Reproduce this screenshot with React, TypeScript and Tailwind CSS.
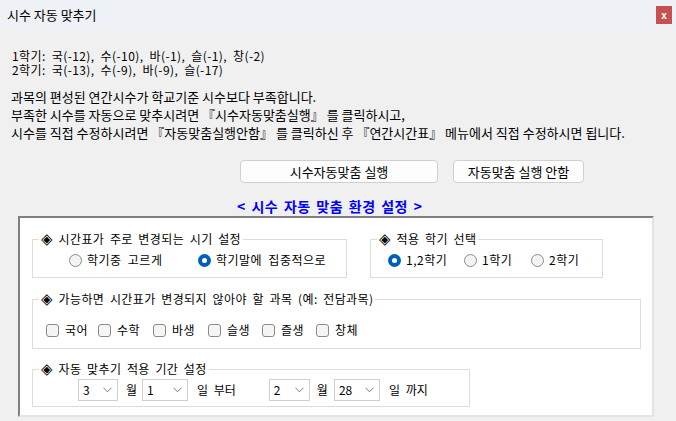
import { useState } from 'react'

const FONT = "font-['Noto_Sans_CJK_KR','Noto_Sans',sans-serif]"

function Radio({ checked, label, onClick, className }: { checked: boolean; label: string; onClick: () => void; className?: string }) {
  return (
    <label className={`flex items-center gap-[5px] ${className ?? ''}`} onClick={onClick}>
      {checked ? (
        <span className="flex h-[13px] w-[13px] items-center justify-center rounded-full bg-[#005fb8]">
          <span className="h-[5px] w-[5px] rounded-full bg-white" />
        </span>
      ) : (
        <span className="h-[13px] w-[13px] rounded-full border border-[#8a8a8a] bg-[#f3f3f3]" />
      )}
      <span className="text-[12px] leading-[14px] tracking-[0.5px] [word-spacing:3px]">{label}</span>
    </label>
  )
}

function Check({ label, className }: { label: string; className?: string }) {
  return (
    <label className={`flex items-center gap-[6px] ${className ?? ''}`}>
      <span className="h-[13px] w-[13px] rounded-[3px] border border-[#8a8a8a] bg-[#f5f5f5]" />
      <span className="text-[12px] leading-[14px] tracking-[0.5px]">{label}</span>
    </label>
  )
}

function Select({ value, className }: { value: string; className?: string }) {
  return (
    <div className={`flex h-[22px] items-center justify-between border border-[#cfcfcf] bg-white pl-[4px] pr-[5px] ${className ?? ''}`}>
      <span className="text-[12px] leading-[14px]">{value}</span>
      <svg width="9" height="6" viewBox="0 0 9 6">
        <polyline points="0.5,0.8 4.5,4.8 8.5,0.8" fill="none" stroke="#7a7a7a" strokeWidth="1" />
      </svg>
    </div>
  )
}

function Group({ title, className, children }: { title: string; className?: string; children: React.ReactNode }) {
  return (
    <fieldset className={`border border-[#dcdcdc] ${className ?? ''}`}>
      <legend className="ml-[6px] px-[2px] text-[12px] leading-[14px] tracking-[0.4px] [word-spacing:2.5px]">
        <span className="font-['DejaVu_Sans',sans-serif] text-[15px] leading-none">◈</span> {title}
      </legend>
      {children}
    </fieldset>
  )
}

export default function App() {
  const [period, setPeriod] = useState(1)
  const [term, setTerm] = useState(0)

  return (
    <div className={`h-[421px] w-[676px] overflow-hidden bg-[#f0f0f0] text-black ${FONT}`}>
      <div className="flex h-[29px] items-center justify-between bg-[#eef2f6] pl-[7px] pr-[4px]">
        <span className="text-[13px]">시수 자동 맞추기</span>
        <span className="flex h-[18px] w-[16px] items-center justify-center bg-[#c75050] text-[10px] font-bold leading-none text-white">x</span>
      </div>

      <div className="pl-[12px] pt-[20px] text-[12px] leading-[14px] tracking-[0.4px] [word-spacing:3px]">
        <p>1학기: 국(-12), 수(-10), 바(-1), 슬(-1), 창(-2)</p>
        <p>2학기: 국(-13), 수(-9), 바(-9), 슬(-17)</p>
      </div>

      <div className="mt-[11px] pl-[11px] text-[13px] leading-[18px]">
        <p>과목의 편성된 연간시수가 학교기준 시수보다 부족합니다.</p>
        <p>부족한 시수를 자동으로 맞추시려면 『시수자동맞춤실행』 를 클릭하시고,</p>
        <p>시수를 직접 수정하시려면 『자동맞춤실행안함』 를 클릭하신 후 『연간시간표』 메뉴에서 직접 수정하시면 됩니다.</p>
      </div>

      <div className="mt-[18px] flex gap-[15px] pl-[240px]">
        <button className="h-[23px] w-[198px] rounded-[4px] border border-[#d0d0d0] bg-[#fdfdfd] text-[13px]">시수자동맞춤 실행</button>
        <button className="h-[23px] w-[131px] rounded-[4px] border border-[#d0d0d0] bg-[#fdfdfd] text-[13px]">자동맞춤 실행 안함</button>
      </div>

      <p className="mt-[14px] pl-[237px] text-[14px] font-bold leading-[18px] tracking-[0.5px] text-[#0000ff] [word-spacing:2px]">&lt; 시수 자동 맞춤 환경 설정 &gt;</p>

      <div className="ml-[18px] mt-[1px] h-[201px] w-[636px] border-2 border-b-[#e3e3e3] border-l-[#808080] border-r-[#e3e3e3] border-t-[#808080] bg-white px-[12px] pt-[14px]">
        <div className="flex gap-[23px]">
          <Group title="시간표가 주로 변경되는 시기 설정" className="h-[46px] w-[315px]">
            <div className="flex pl-[36px] pt-[6px]">
              <Radio checked={period === 0} label="학기중 고르게" onClick={() => setPeriod(0)} className="w-[129px]" />
              <Radio checked={period === 1} label="학기말에 집중적으로" onClick={() => setPeriod(1)} />
            </div>
          </Group>
          <Group title="적용 학기 선택" className="h-[46px] w-[233px]">
            <div className="flex pl-[17px] pt-[6px]">
              <Radio checked={term === 0} label="1,2학기" onClick={() => setTerm(0)} className="w-[76px]" />
              <Radio checked={term === 1} label="1학기" onClick={() => setTerm(1)} className="w-[67px]" />
              <Radio checked={term === 2} label="2학기" onClick={() => setTerm(2)} />
            </div>
          </Group>
        </div>

        <Group title="가능하면 시간표가 변경되지 않아야 할 과목 (예: 전담과목)" className="mt-[14px] h-[57px] w-[609px]">
          <div className="flex pl-[13px] pt-[16px]">
            <Check label="국어" className="w-[52px]" />
            <Check label="수학" className="w-[55px]" />
            <Check label="바생" className="w-[55px]" />
            <Check label="슬생" className="w-[54px]" />
            <Check label="즐생" className="w-[54px]" />
            <Check label="창체" />
          </div>
        </Group>

        <Group title="자동 맞추기 적용 기간 설정" className="mt-[13px] h-[45px] w-[438px]">
          <div className="flex items-center pl-[45px] pt-[2px] text-[12px] leading-[14px] [word-spacing:3px]">
            <Select value="3" className="w-[40px]" />
            <span className="ml-[8px]">월</span>
            <Select value="1" className="ml-[5px] w-[46px]" />
            <span className="ml-[9px]">일 부터</span>
            <Select value="2" className="ml-[33px] w-[41px]" />
            <span className="ml-[7px]">월</span>
            <Select value="28" className="ml-[6px] w-[46px]" />
            <span className="ml-[9px]">일 까지</span>
          </div>
        </Group>
      </div>
    </div>
  )
}
